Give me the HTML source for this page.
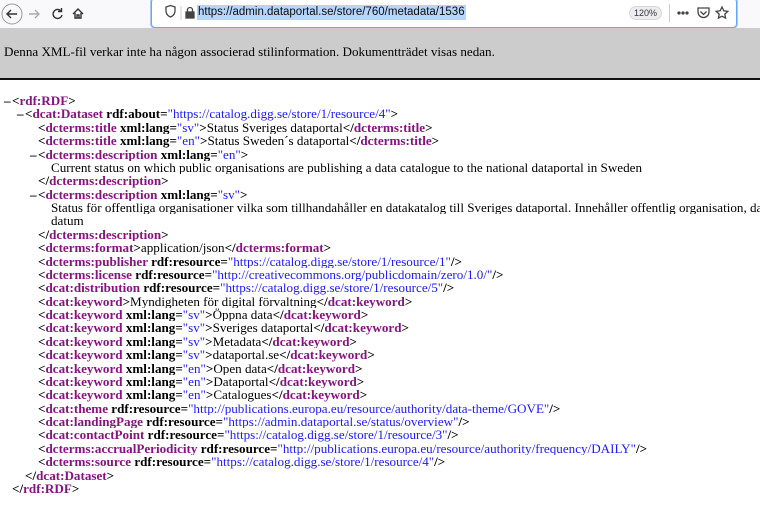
<!DOCTYPE html>
<html><head><meta charset="utf-8"><style>
*{margin:0;padding:0;box-sizing:border-box}
html,body{width:760px;height:520px;overflow:hidden;background:#fff}
body{position:relative;font-family:"Liberation Serif",serif;font-size:13.1px}
#tb{position:absolute;left:0;top:0;width:760px;height:28px;background:#f9f9fb}
#url{position:absolute;left:151px;top:-2px;width:586px;height:30px;background:#fff;border:1px solid #6aa4f5;border-radius:4px;box-shadow:0 0 0 1px #a9cbf7}
#url .t{position:absolute;left:45px;top:6px;font-family:"Liberation Sans",sans-serif;font-size:11.5px;color:#0c0c0d;background:#b5d5fd;line-height:15px;padding:0 1px}
#zoom{position:absolute;left:477px;top:7px;width:33px;height:14px;border-radius:7px;background:#ededf0;border:1px solid #d7d7db;font-family:"Liberation Sans",sans-serif;font-size:9px;line-height:12px;text-align:center;color:#333}
#banner{position:absolute;left:0;top:28px;width:760px;height:52px;background:#cccccc;border-bottom:2px solid #111}
#banner div{position:absolute;left:4px;top:16px;font-size:13.1px;color:#000;white-space:nowrap}
#xml{position:absolute;left:0;top:94px;width:760px;height:410px;overflow:hidden}
.l{position:relative;height:13.38px;line-height:13.38px;white-space:nowrap;overflow:hidden}
.m{position:absolute;font-weight:bold}
b{font-weight:bold;color:#000}
.n{color:#881280;font-weight:bold}
.v{color:#1a1aff}
</style></head><body>
<div id="tb">
<svg width="150" height="28" style="position:absolute;left:0;top:0" fill="none" stroke="#333" stroke-width="1.4">
<circle cx="12" cy="14" r="10" stroke="#999" stroke-width="1"/>
<path d="M17 14H7M11 10l-4 4 4 4"/>
<path d="M29 14h10M35 10l4 4-4 4" stroke="#aaa"/>
<path d="M61 11a4.5 4.5 0 1 0 1 4M61.5 8v3.5h-3.5"/>
<path d="M73 14l5-5 5 5M75 13v5h6v-5M77 18v-3h2v3"/>
</svg>
<div id="url">
<svg width="40" height="28" style="position:absolute;left:8px;top:0" fill="none" stroke="#444" stroke-width="1.3">
<path d="M6 8l4.5-1.5L15 8v4c0 3-2 5-4.5 6C8 17 6 15 6 12z"/>
<line x1="21" y1="7" x2="21" y2="21" stroke="#ccc" stroke-width="1"/>
<rect x="26" y="13" width="8" height="6" fill="#444"/><path d="M27.5 13v-2a2.5 2.5 0 0 1 5 0v2"/>
</svg>
<div class="t">https://admin.dataportal.se/store/760/metadata/1536</div>
<div id="zoom">120%</div>
<div style="position:absolute;left:517px;top:5px;width:1px;height:18px;background:#ccc"></div>
<svg width="60" height="28" style="position:absolute;left:523px;top:0" fill="none" stroke="#444" stroke-width="1.3">
<circle cx="4" cy="14" r="1" fill="#444"/><circle cx="8" cy="14" r="1" fill="#444"/><circle cx="12" cy="14" r="1" fill="#444"/>
<path d="M23 9h11v4a5.5 5.5 0 0 1-11 0z M25.5 12.5l3 3 3-3"/>
<path d="M47 8l1.8 3.8 4 .5-3 2.8.8 4L47 17.2 43.4 19.1l.8-4-3-2.8 4-.5z"/>
</svg>
</div>
</div>
<div id="banner"><div>Denna XML-fil verkar inte ha någon associerad stilinformation. Dokumentträdet visas nedan.</div></div>
<div id="xml">
<div class="l" style="padding-left:12px"><span class="m" style="left:4px">–</span><b>&lt;</b><span class="n">rdf:RDF</span><b>&gt;</b></div>
<div class="l" style="padding-left:25px"><span class="m" style="left:17px">–</span><b>&lt;</b><span class="n">dcat:Dataset</span><b> rdf:about=</b><span class="v">"https://catalog.digg.se/store/1/resource/4"</span><b>&gt;</b></div>
<div class="l" style="padding-left:38px"><b>&lt;</b><span class="n">dcterms:title</span><b> xml:lang=</b><span class="v">"sv"</span><b>&gt;</b>Status Sveriges dataportal<b>&lt;/</b><span class="n">dcterms:title</span><b>&gt;</b></div>
<div class="l" style="padding-left:38px"><b>&lt;</b><span class="n">dcterms:title</span><b> xml:lang=</b><span class="v">"en"</span><b>&gt;</b>Status Sweden´s dataportal<b>&lt;/</b><span class="n">dcterms:title</span><b>&gt;</b></div>
<div class="l" style="padding-left:38px"><span class="m" style="left:30px">–</span><b>&lt;</b><span class="n">dcterms:description</span><b> xml:lang=</b><span class="v">"en"</span><b>&gt;</b></div>
<div class="l" style="padding-left:51px">Current status on which public organisations are publishing a data catalogue to the national dataportal in Sweden</div>
<div class="l" style="padding-left:38px"><b>&lt;/</b><span class="n">dcterms:description</span><b>&gt;</b></div>
<div class="l" style="padding-left:38px"><span class="m" style="left:30px">–</span><b>&lt;</b><span class="n">dcterms:description</span><b> xml:lang=</b><span class="v">"sv"</span><b>&gt;</b></div>
<div class="l" style="padding-left:51px">Status för offentliga organisationer vilka som tillhandahåller en datakatalog till Sveriges dataportal. Innehåller offentlig organisation, da</div>
<div class="l" style="padding-left:51px">datum</div>
<div class="l" style="padding-left:38px"><b>&lt;/</b><span class="n">dcterms:description</span><b>&gt;</b></div>
<div class="l" style="padding-left:38px"><b>&lt;</b><span class="n">dcterms:format</span><b>&gt;</b>application/json<b>&lt;/</b><span class="n">dcterms:format</span><b>&gt;</b></div>
<div class="l" style="padding-left:38px"><b>&lt;</b><span class="n">dcterms:publisher</span><b> rdf:resource=</b><span class="v">"https://catalog.digg.se/store/1/resource/1"</span><b>/&gt;</b></div>
<div class="l" style="padding-left:38px"><b>&lt;</b><span class="n">dcterms:license</span><b> rdf:resource=</b><span class="v">"http://creativecommons.org/publicdomain/zero/1.0/"</span><b>/&gt;</b></div>
<div class="l" style="padding-left:38px"><b>&lt;</b><span class="n">dcat:distribution</span><b> rdf:resource=</b><span class="v">"https://catalog.digg.se/store/1/resource/5"</span><b>/&gt;</b></div>
<div class="l" style="padding-left:38px"><b>&lt;</b><span class="n">dcat:keyword</span><b>&gt;</b>Myndigheten för digital förvaltning<b>&lt;/</b><span class="n">dcat:keyword</span><b>&gt;</b></div>
<div class="l" style="padding-left:38px"><b>&lt;</b><span class="n">dcat:keyword</span><b> xml:lang=</b><span class="v">"sv"</span><b>&gt;</b>Öppna data<b>&lt;/</b><span class="n">dcat:keyword</span><b>&gt;</b></div>
<div class="l" style="padding-left:38px"><b>&lt;</b><span class="n">dcat:keyword</span><b> xml:lang=</b><span class="v">"sv"</span><b>&gt;</b>Sveriges dataportal<b>&lt;/</b><span class="n">dcat:keyword</span><b>&gt;</b></div>
<div class="l" style="padding-left:38px"><b>&lt;</b><span class="n">dcat:keyword</span><b> xml:lang=</b><span class="v">"sv"</span><b>&gt;</b>Metadata<b>&lt;/</b><span class="n">dcat:keyword</span><b>&gt;</b></div>
<div class="l" style="padding-left:38px"><b>&lt;</b><span class="n">dcat:keyword</span><b> xml:lang=</b><span class="v">"sv"</span><b>&gt;</b>dataportal.se<b>&lt;/</b><span class="n">dcat:keyword</span><b>&gt;</b></div>
<div class="l" style="padding-left:38px"><b>&lt;</b><span class="n">dcat:keyword</span><b> xml:lang=</b><span class="v">"en"</span><b>&gt;</b>Open data<b>&lt;/</b><span class="n">dcat:keyword</span><b>&gt;</b></div>
<div class="l" style="padding-left:38px"><b>&lt;</b><span class="n">dcat:keyword</span><b> xml:lang=</b><span class="v">"en"</span><b>&gt;</b>Dataportal<b>&lt;/</b><span class="n">dcat:keyword</span><b>&gt;</b></div>
<div class="l" style="padding-left:38px"><b>&lt;</b><span class="n">dcat:keyword</span><b> xml:lang=</b><span class="v">"en"</span><b>&gt;</b>Catalogues<b>&lt;/</b><span class="n">dcat:keyword</span><b>&gt;</b></div>
<div class="l" style="padding-left:38px"><b>&lt;</b><span class="n">dcat:theme</span><b> rdf:resource=</b><span class="v">"http://publications.europa.eu/resource/authority/data-theme/GOVE"</span><b>/&gt;</b></div>
<div class="l" style="padding-left:38px"><b>&lt;</b><span class="n">dcat:landingPage</span><b> rdf:resource=</b><span class="v">"https://admin.dataportal.se/status/overview"</span><b>/&gt;</b></div>
<div class="l" style="padding-left:38px"><b>&lt;</b><span class="n">dcat:contactPoint</span><b> rdf:resource=</b><span class="v">"https://catalog.digg.se/store/1/resource/3"</span><b>/&gt;</b></div>
<div class="l" style="padding-left:38px"><b>&lt;</b><span class="n">dcterms:accrualPeriodicity</span><b> rdf:resource=</b><span class="v">"http://publications.europa.eu/resource/authority/frequency/DAILY"</span><b>/&gt;</b></div>
<div class="l" style="padding-left:38px"><b>&lt;</b><span class="n">dcterms:source</span><b> rdf:resource=</b><span class="v">"https://catalog.digg.se/store/1/resource/4"</span><b>/&gt;</b></div>
<div class="l" style="padding-left:25px"><b>&lt;/</b><span class="n">dcat:Dataset</span><b>&gt;</b></div>
<div class="l" style="padding-left:12px"><b>&lt;/</b><span class="n">rdf:RDF</span><b>&gt;</b></div>
</div>
</body></html>
